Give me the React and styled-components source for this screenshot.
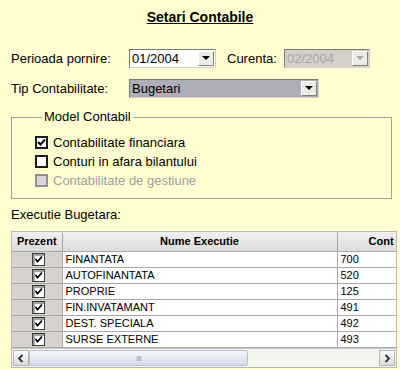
import React from 'react';
import styled, { createGlobalStyle } from 'styled-components';

const GlobalStyle = createGlobalStyle`
  html, body {
    margin: 0;
    padding: 0;
    background: #ffffd2;
  }
`;

const Page = styled.div`
  width: 400px;
  height: 370px;
  box-sizing: border-box;
  padding: 0 4px 0 11px;
  background: #ffffd2;
  font-family: 'Liberation Sans', Arial, sans-serif;
  font-size: 13px;
  color: #000;
  overflow: hidden;
`;

const Title = styled.div`
  padding-top: 9px;
  height: 18px;
  text-align: center;
  font-weight: bold;
  font-size: 14px;
  text-decoration: underline;
  margin-right: 7px;
`;

const FormRow = styled.div`
  display: flex;
  align-items: center;
  height: 20px;
  margin-top: ${(p) => p.top}px;
`;

const Label = styled.span`
  width: ${(p) => p.width}px;
  flex-shrink: 0;
  white-space: nowrap;
`;

const Combo = styled.div`
  width: ${(p) => p.width}px;
  height: 19px;
  box-sizing: border-box;
  display: flex;
  align-items: stretch;
  border: 1px solid #7b7b7b;
  border-right-color: #d4d0c8;
  border-bottom-color: #d4d0c8;
  background: ${(p) => (p.disabled ? '#d4d0c8' : p.selected ? '#aeaeb8' : '#fff')};
  color: ${(p) => (p.disabled ? '#a6a6a6' : '#000')};
`;

const ComboText = styled.span`
  flex: 1;
  padding-left: 2px;
  line-height: 17px;
`;

const ComboButton = styled.span`
  width: 16px;
  box-sizing: border-box;
  margin: 1px;
  display: flex;
  align-items: center;
  justify-content: center;
  background: #ecebe6;
  border: 1px solid #fff;
  border-right-color: #808080;
  border-bottom-color: #808080;
  &::after {
    content: '';
    border-left: 4px solid transparent;
    border-right: 4px solid transparent;
    border-top: 4px solid ${(p) => (p.disabled ? '#a6a6a6' : '#000')};
  }
`;

const GroupBox = styled.fieldset`
  margin: 12px 4px 0 0;
  padding: 9px 0 7px 23px;
  height: 89px;
  box-sizing: border-box;
  border: 1px solid #a0a0a0;
  border-radius: 0;
`;

const Legend = styled.legend`
  padding: 0 2px;
  margin-left: 7px;
  line-height: 14px;
`;

const CheckRow = styled.div`
  display: flex;
  align-items: center;
  height: 19px;
  gap: 5px;
  color: ${(p) => (p.disabled ? '#a0a0a0' : '#000')};
`;

const Box = styled.span`
  width: 13px;
  height: 13px;
  box-sizing: border-box;
  border: 2px solid ${(p) => (p.disabled ? '#909090' : '#1a1a1a')};
  background: ${(p) => (p.disabled ? '#d9d6e2' : '#fff')};
  display: flex;
  align-items: center;
  justify-content: center;
`;

const Section = styled.div`
  margin-top: 7px;
  height: 18px;
  line-height: 18px;
`;

const Grid = styled.div`
  margin-top: 7px;
  width: 386px;
  height: 137px;
  box-sizing: border-box;
  border: 1px solid #b8b8b8;
  background: #f2f2f2;
  overflow: hidden;
  font-size: 11px;
`;

const Viewport = styled.div`
  height: 116px;
  overflow: hidden;
`;

const Table = styled.table`
  border-collapse: collapse;
  table-layout: fixed;
  width: 426px;
`;

const Th = styled.th`
  height: 19px;
  padding: 0 4px;
  box-sizing: border-box;
  background: linear-gradient(#f0f0f0, #dcdcdc);
  border-right: 1px solid #a8a8a8;
  border-bottom: 1px solid #a8a8a8;
  font-weight: bold;
  text-align: ${(p) => (p.left ? 'left' : 'center')};
  padding-left: ${(p) => (p.left ? 31 : 4)}px;
`;

const Td = styled.td`
  height: 15px;
  padding: 0 0 0 3px;
  border: 1px solid #a8a8a8;
  border-top: 0;
  border-left: 0;
  background: ${(p) => (p.flag ? '#d6d3ce' : '#fff')};
  text-align: ${(p) => (p.flag ? 'center' : 'left')};
  white-space: nowrap;
  vertical-align: middle;
  line-height: 13px;
`;

const Scrollbar = styled.div`
  display: flex;
  height: 19px;
  box-sizing: border-box;
  padding: 1px;
  border-top: 1px solid #c8c8c8;
  background: #f4f4f0;
`;

const ArrowButton = styled.span`
  width: 16px;
  box-sizing: border-box;
  border: 1px solid #b5b5b5;
  background: linear-gradient(#fafafa, #dcdcdc);
  display: flex;
  align-items: center;
  justify-content: center;
`;

const Thumb = styled.span`
  width: 219px;
  box-sizing: border-box;
  border: 1px solid #b8c2d0;
  border-radius: 2px;
  background: linear-gradient(#f4f6fb, #d4dbe8);
  display: flex;
  align-items: center;
  justify-content: center;
  color: #a4acbd;
  font-size: 8px;
  letter-spacing: -1px;
`;

const Track = styled.span`
  flex: 1;
`;

const GroupCheck = () => (
  <svg width="9" height="9" viewBox="0 0 9 9">
    <path d="M1 4 L3.5 6.5 L8 1.5" stroke="#000" strokeWidth="2" fill="none" />
  </svg>
);

const CellCheck = () => (
  <svg width="13" height="13" viewBox="0 0 13 13" style={{ display: 'block', margin: '0 auto' }}>
    <rect x="0.5" y="0.5" width="12" height="12" fill="#fff" stroke="#3c3c3c" />
    <rect x="1" y="1" width="11" height="2" fill="#a0a0a0" />
    <rect x="1" y="1" width="2" height="11" fill="#a0a0a0" />
    <path d="M3.5 6 L5.5 8.5 L10 3.5" stroke="#000" strokeWidth="1.8" fill="none" />
  </svg>
);

const Chevron = ({ dir }) => (
  <svg width="8" height="9" viewBox="0 0 8 9">
    <path
      d={dir === 'left' ? 'M5.5 1 L2 4.5 L5.5 8' : 'M2.5 1 L6 4.5 L2.5 8'}
      stroke="#303850"
      strokeWidth="2"
      fill="none"
    />
  </svg>
);

const rows = [
  ['FINANTATA', '700'],
  ['AUTOFINANTATA', '520'],
  ['PROPRIE', '125'],
  ['FIN.INVATAMANT', '491'],
  ['DEST. SPECIALA', '492'],
  ['SURSE EXTERNE', '493'],
];

export default function App() {
  return (
    <Page>
      <GlobalStyle />
      <Title>Setari Contabile</Title>

      <FormRow top={21}>
        <Label width={118}>Perioada pornire:</Label>
        <Combo width={87}>
          <ComboText>01/2004</ComboText>
          <ComboButton />
        </Combo>
        <Label width={57} style={{ paddingLeft: 11 }}>Curenta:</Label>
        <Combo width={86} disabled>
          <ComboText>02/2004</ComboText>
          <ComboButton disabled />
        </Combo>
      </FormRow>

      <FormRow top={10}>
        <Label width={118}>Tip Contabilitate:</Label>
        <Combo width={190} selected>
          <ComboText>Bugetari</ComboText>
          <ComboButton />
        </Combo>
      </FormRow>

      <GroupBox>
        <Legend>Model Contabil</Legend>
        <CheckRow>
          <Box><GroupCheck /></Box>
          Contabilitate financiara
        </CheckRow>
        <CheckRow>
          <Box />
          Conturi in afara bilantului
        </CheckRow>
        <CheckRow disabled>
          <Box disabled />
          Contabilitate de gestiune
        </CheckRow>
      </GroupBox>

      <Section>Executie Bugetara:</Section>

      <Grid>
        <Viewport>
          <Table>
            <colgroup>
              <col style={{ width: 50 }} />
              <col style={{ width: 275 }} />
              <col style={{ width: 101 }} />
            </colgroup>
            <thead>
              <tr>
                <Th>Prezent</Th>
                <Th>Nume Executie</Th>
                <Th left>Cont</Th>
              </tr>
            </thead>
            <tbody>
              {rows.map(([name, cont]) => (
                <tr key={name}>
                  <Td flag><CellCheck /></Td>
                  <Td>{name}</Td>
                  <Td>{cont}</Td>
                </tr>
              ))}
            </tbody>
          </Table>
        </Viewport>
        <Scrollbar>
          <ArrowButton><Chevron dir="left" /></ArrowButton>
          <Thumb>IIII</Thumb>
          <Track />
          <ArrowButton><Chevron dir="right" /></ArrowButton>
        </Scrollbar>
      </Grid>
    </Page>
  );
}
